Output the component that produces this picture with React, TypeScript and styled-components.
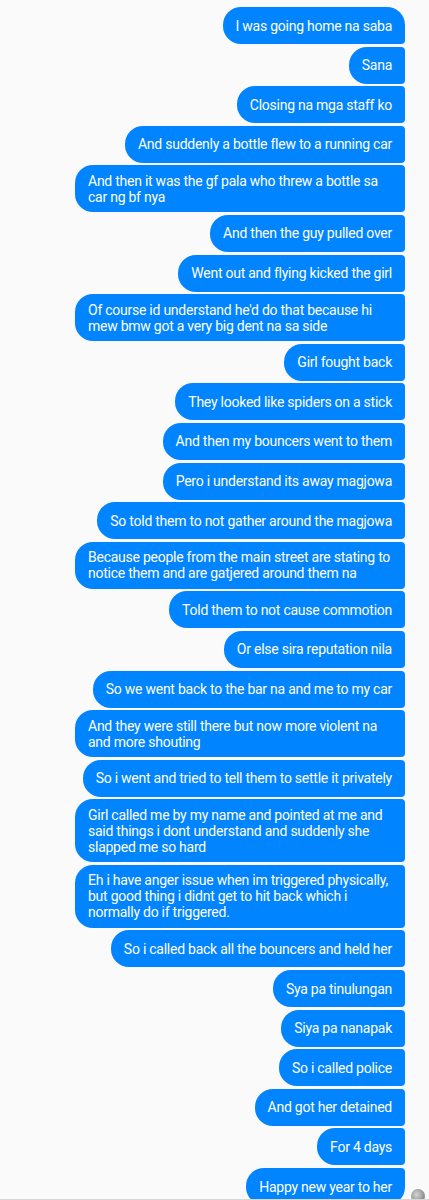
import * as React from 'react'
import styled, { createGlobalStyle } from 'styled-components'

const Global = createGlobalStyle`
  html, body {
    margin: 0;
    padding: 0;
    background: #fafafa;
  }
  body {
    font-family: Roboto, "Noto Sans", "Liberation Sans", sans-serif;
  }
`

const Screen = styled.div`
  width: 429px;
  height: 1200px;
  overflow: hidden;
  position: relative;
  background: #fafafa;
  border-bottom: 1px solid #d8d8d8;
  box-sizing: border-box;
`

const Thread = styled.div`
  display: flex;
  flex-direction: column;
  align-items: flex-end;
  gap: 2.6px;
  padding: 7px 24px 0 0;
`

const Bubble = styled.div<{ $wide: boolean; $first: boolean; $last: boolean }>`
  box-sizing: border-box;
  min-height: 37px;
  width: ${(p) => (p.$wide ? '330px' : 'auto')};
  padding: 7.5px 13px;
  display: flex;
  flex-direction: column;
  justify-content: center;
  background: #0084ff;
  color: #fff;
  font-size: 14px;
  letter-spacing: -0.25px;
  line-height: 16px;
  white-space: nowrap;
  border-radius: 18px ${(p) => (p.$first ? '18px' : '4px')} ${(p) => (p.$last ? '18px' : '4px')} 18px;
`

const Line = styled.span`
  display: block;
`

const Seen = styled.div`
  position: absolute;
  right: 4px;
  bottom: -4px;
  width: 14px;
  height: 14px;
  border-radius: 50%;
  background: radial-gradient(circle at 40% 40%, #d6d6d6 0%, #8a8a8a 70%, #6a6a6a 100%);
`

const messages: string[][] = [
  ['I was going home na saba'],
  ['Sana'],
  ['Closing na mga staff ko'],
  ['And suddenly a bottle flew to a running car'],
  ['And then it was the gf pala who threw a bottle sa', 'car ng bf nya'],
  ['And then the guy pulled over'],
  ['Went out and flying kicked the girl'],
  ["Of course id understand he'd do that because hi", 'mew bmw got a very big dent na sa side'],
  ['Girl fought back'],
  ['They looked like spiders on a stick'],
  ['And then my bouncers went to them'],
  ['Pero i understand its away magjowa'],
  ['So told them to not gather around the magjowa'],
  ['Because people from the main street are stating to', 'notice them and are gatjered around them na'],
  ['Told them to not cause commotion'],
  ['Or else sira reputation nila'],
  ['So we went back to the bar na and me to my car'],
  ['And they were still there but now more violent na', 'and more shouting'],
  ['So i went and tried to tell them to settle it privately'],
  ['Girl called me by my name and pointed at me and', 'said things i dont understand and suddenly she', 'slapped me so hard'],
  ['Eh i have anger issue when im triggered physically,', 'but good thing i didnt get to hit back which i', 'normally do if triggered.'],
  ['So i called back all the bouncers and held her'],
  ['Sya pa tinulungan'],
  ['Siya pa nanapak'],
  ['So i called police'],
  ['And got her detained'],
  ['For 4 days'],
  ['Happy new year to her'],
]

export default function App() {
  return (
    <Screen>
      <Global />
      <Thread>
        {messages.map((lines, i) => (
          <Bubble
            key={i}
            $wide={lines.length > 1}
            $first={i === 0}
            $last={i === messages.length - 1}
          >
            {lines.map((l, j) => (
              <Line key={j}>{l}</Line>
            ))}
          </Bubble>
        ))}
      </Thread>
      <Seen />
    </Screen>
  )
}
